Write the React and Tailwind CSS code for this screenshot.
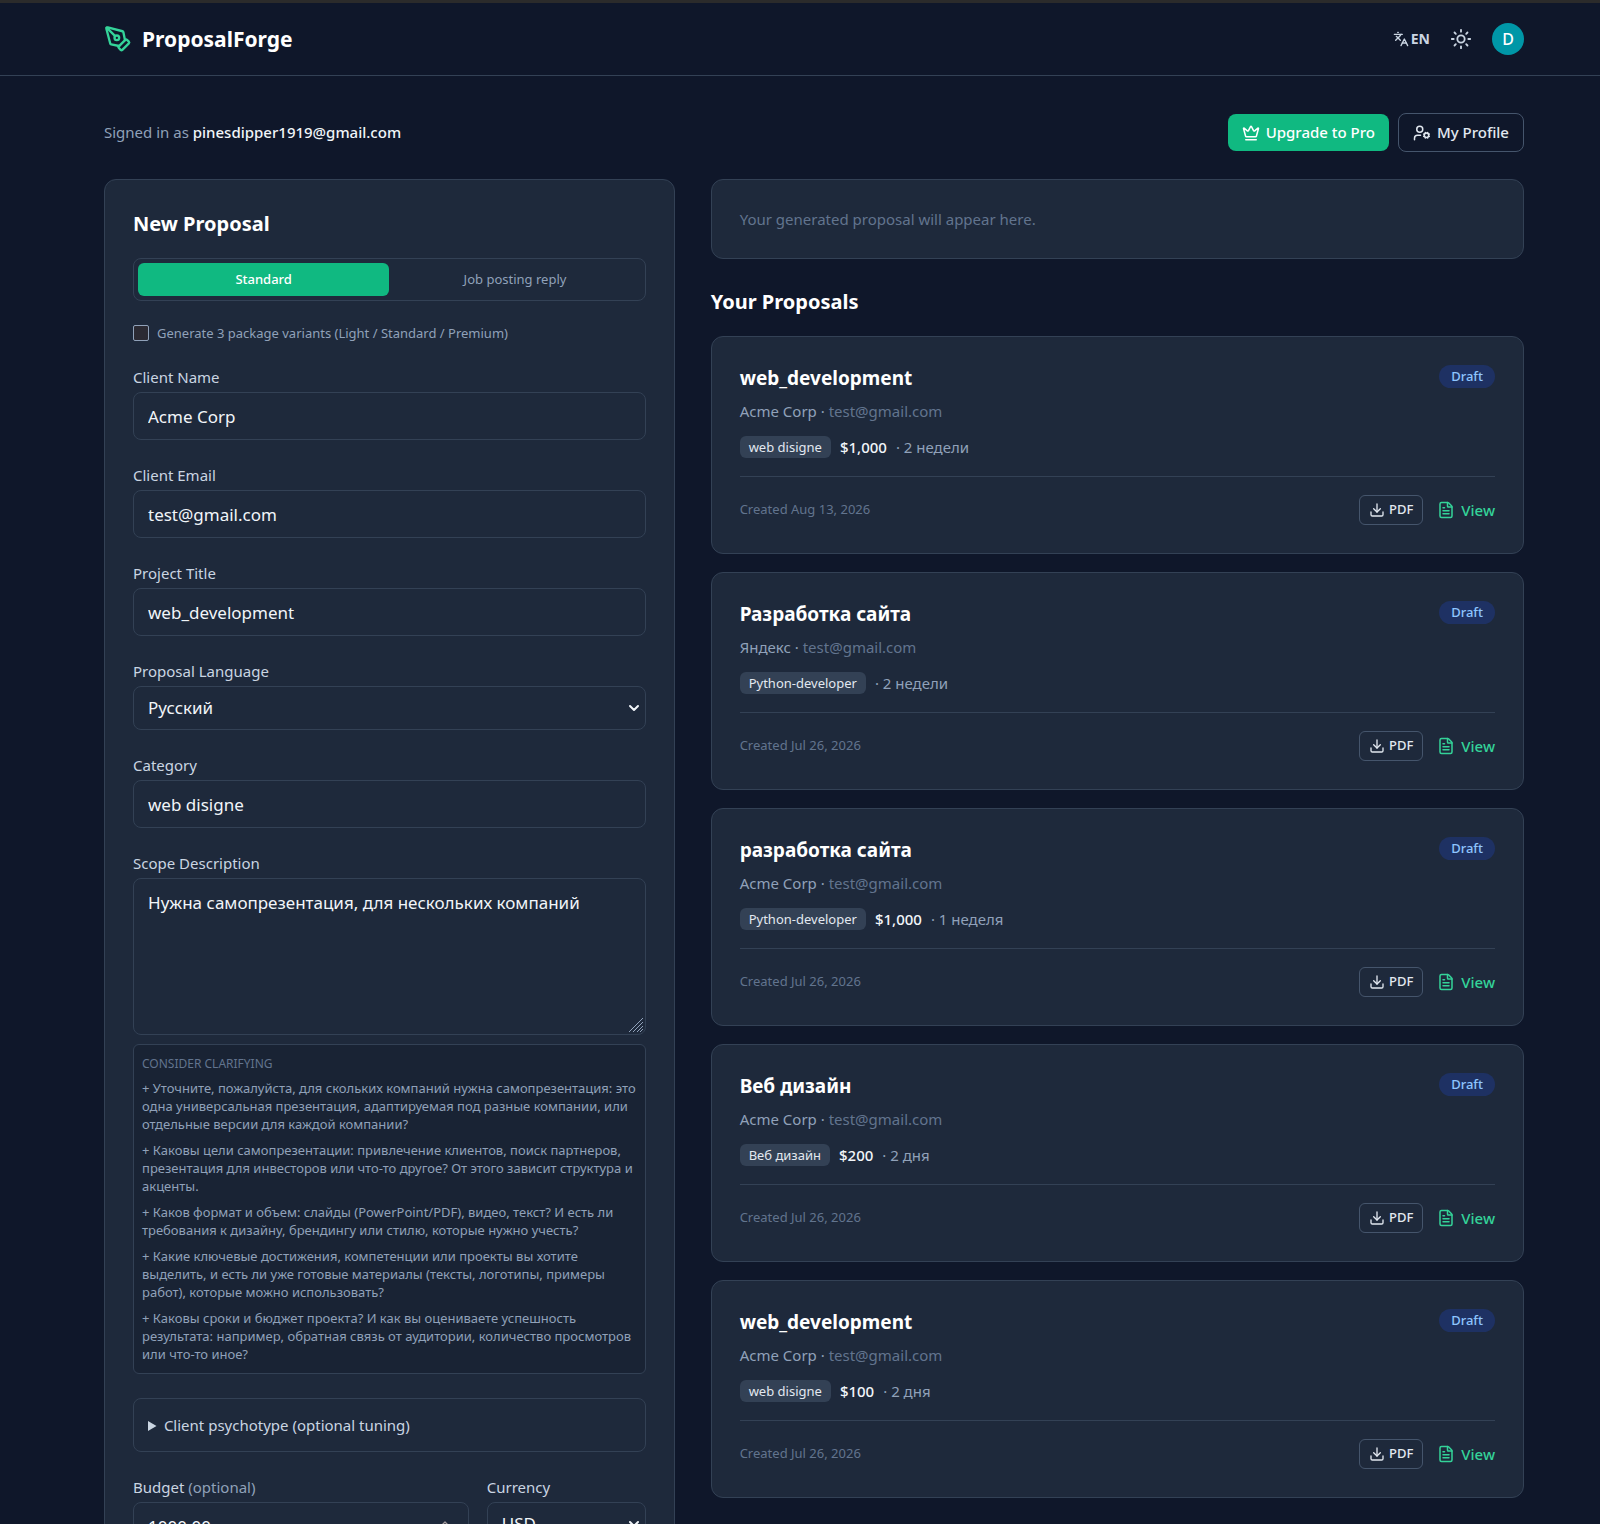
import { useState } from 'react'
import { ChevronDown, ChevronUp, Crown, Download, FileText, Languages, PenTool, Sun, UserCog } from 'lucide-react'

const PROPOSALS = [
  { id: 1, title: 'web_development', client: 'Acme Corp', category: 'web disigne', budget: '$1,000', term: '2 недели', created: 'Aug 13, 2026' },
  { id: 2, title: 'Разработка сайта', client: 'Яндекс', category: 'Python-developer', budget: '', term: '2 недели', created: 'Jul 26, 2026' },
  { id: 3, title: 'разработка сайта', client: 'Acme Corp', category: 'Python-developer', budget: '$1,000', term: '1 неделя', created: 'Jul 26, 2026' },
  { id: 4, title: 'Веб дизайн', client: 'Acme Corp', category: 'Веб дизайн', budget: '$200', term: '2 дня', created: 'Jul 26, 2026' },
  { id: 5, title: 'web_development', client: 'Acme Corp', category: 'web disigne', budget: '$100', term: '2 дня', created: 'Jul 26, 2026' },
]

const CLARIFICATIONS = [
  'Уточните, пожалуйста, для скольких компаний нужна самопрезентация: это одна универсальная презентация, адаптируемая под разные компании, или отдельные версии для каждой компании?',
  'Каковы цели самопрезентации: привлечение клиентов, поиск партнеров, презентация для инвесторов или что-то другое? От этого зависит структура и акценты.',
  'Каков формат и объем: слайды (PowerPoint/PDF), видео, текст? И есть ли требования к дизайну, брендингу или стилю, которые нужно учесть?',
  'Какие ключевые достижения, компетенции или проекты вы хотите выделить, и есть ли уже готовые материалы (тексты, логотипы, примеры работ), которые можно использовать?',
  'Каковы сроки и бюджет проекта? И как вы оцениваете успешность результата: например, обратная связь от аудитории, количество просмотров или что-то иное?',
]

const fieldClass =
  'block w-full rounded-lg border border-[#334155] bg-[#1e293b] px-3.5 text-[17px] leading-6 text-slate-100 outline-none focus:border-[#10b981]'

function App() {
  return (
    <div className="h-screen overflow-hidden bg-[#0f172a] font-['Noto_Sans',sans-serif] text-slate-100 scheme-dark">
      <Header />
      <main className="pl-7">
        <div className="mx-auto max-w-[1484px] px-8 pt-[37px]">
          <div className="flex items-center justify-between">
            <p className="text-[15px] text-slate-400">
              Signed in as <span className="font-medium text-slate-100">pinesdipper1919@gmail.com</span>
            </p>
            <div className="flex items-center gap-[9px]">
              <button className="flex h-[37px] items-center gap-1.5 rounded-lg bg-[#10b981] px-3.5 text-[15px] font-medium text-white hover:bg-emerald-600">
                <Crown className="size-[18px]" />
                Upgrade to Pro
              </button>
              <button className="flex h-[39px] items-center gap-1.5 rounded-lg border border-slate-600 px-3.5 text-[15px] font-medium text-slate-200 hover:bg-[#1e293b]">
                <UserCog className="size-[18px]" />
                My Profile
              </button>
            </div>
          </div>

          <div className="mt-[27px] grid grid-cols-12 items-start gap-9">
            <ProposalForm />
            <section className="col-span-7">
              <div className="rounded-xl border border-[#334155] bg-[#1e293b] px-7 py-7">
                <p className="text-[15px] leading-[22px] text-slate-500">Your generated proposal will appear here.</p>
              </div>
              <h2 className="mt-[27px] text-xl leading-8 font-bold text-white">Your Proposals</h2>
              <ul className="mt-[18px] space-y-[18px]">
                {PROPOSALS.map((proposal) => (
                  <ProposalCard key={proposal.id} proposal={proposal} />
                ))}
              </ul>
            </section>
          </div>
        </div>
      </main>
    </div>
  )
}

function Header() {
  return (
    <header className="border-t-3 border-b border-t-[#2b2b2b] border-b-[#334155] pl-7">
      <div className="mx-auto flex h-[72px] max-w-[1484px] items-center justify-between px-8">
        <a href="#" className="flex items-center gap-2.5">
          <PenTool className="size-7 text-[#34d399]" />
          <span className="pt-0.5 text-[21px] font-bold text-white">ProposalForge</span>
        </a>
        <div className="flex items-center gap-5">
          <button className="flex items-center gap-0.5 text-sm font-bold text-slate-300">
            <Languages className="size-4" />
            EN
          </button>
          <button aria-label="Toggle theme" className="text-slate-300">
            <Sun className="size-[22px]" />
          </button>
          <button className="size-8 rounded-full bg-[#0097a7] text-base font-medium text-white">D</button>
        </div>
      </div>
    </header>
  )
}

function ProposalForm() {
  const [mode, setMode] = useState('standard')

  return (
    <form className="col-span-5 rounded-xl border border-[#334155] bg-[#1e293b] px-7 py-7">
      <h2 className="text-xl leading-8 font-bold text-white">New Proposal</h2>

      <div className="mt-[18px] flex h-[43px] rounded-lg border border-[#334155] p-1">
        <ModeButton active={mode === 'standard'} onClick={() => setMode('standard')}>
          Standard
        </ModeButton>
        <ModeButton active={mode === 'reply'} onClick={() => setMode('reply')}>
          Job posting reply
        </ModeButton>
      </div>

      <label className="mt-[23px] flex items-center gap-2 text-[13px] leading-[18px] text-slate-400">
        <input
          type="checkbox"
          className="size-4 appearance-none rounded-xs border border-slate-400 bg-[#2b2a33] checked:bg-[#10b981]"
        />
        Generate 3 package variants (Light / Standard / Premium)
      </label>

      <div className="mt-6 space-y-6">
        <Field id="client-name" label="Client Name">
          <input id="client-name" defaultValue="Acme Corp" className={`${fieldClass} h-12`} />
        </Field>
        <Field id="client-email" label="Client Email">
          <input id="client-email" type="email" defaultValue="test@gmail.com" className={`${fieldClass} h-12`} />
        </Field>
        <Field id="project-title" label="Project Title">
          <input id="project-title" defaultValue="web_development" className={`${fieldClass} h-12`} />
        </Field>
        <Field id="language" label="Proposal Language">
          <Select id="language" options={['Русский', 'English']} />
        </Field>
        <Field id="category" label="Category">
          <input id="category" defaultValue="web disigne" className={`${fieldClass} h-12`} />
        </Field>
        <div>
          <Field id="scope" label="Scope Description">
            <div className="relative">
              <textarea
                id="scope"
                defaultValue="Нужна самопрезентация, для нескольких компаний"
                className={`${fieldClass} h-[157px] resize-y py-3 [&::-webkit-resizer]:bg-transparent`}
              />
              <svg
                viewBox="0 0 16 16"
                className="pointer-events-none absolute right-0.5 bottom-0.5 size-4 stroke-slate-400"
                fill="none"
              >
                <path d="M1 15 15 1M5 15 15 5M9 15l6-6M12 15l3-3" />
              </svg>
            </div>
          </Field>
          <div className="mt-[9px] rounded-md border border-[#334155] bg-[#192334] px-2 py-2.5 text-[13px] leading-[18px] text-slate-400">
            <p className="mb-1.5 text-xs leading-[18px] text-slate-500 uppercase">Consider clarifying</p>
            <ul className="space-y-2">
              {CLARIFICATIONS.map((text) => (
                <li key={text}>
                  <button type="button" className="block text-left hover:text-[#34d399]">
                    {`+ ${text}`}
                  </button>
                </li>
              ))}
            </ul>
          </div>
        </div>

        <details className="rounded-lg border border-[#334155] px-3.5 py-3.5 text-[15px] leading-6 text-slate-300">
          <summary className="cursor-pointer">Client psychotype (optional tuning)</summary>
        </details>

        <div className="grid grid-cols-3 gap-[18px]">
          <div className="col-span-2">
            <Field
              id="budget"
              label={
                <>
                  Budget <span className="text-slate-400">(optional)</span>
                </>
              }
            >
              <div className="relative">
                <input
                  id="budget"
                  type="number"
                  step="0.01"
                  defaultValue="1000.00"
                  className={`${fieldClass} h-12 [appearance:textfield] [&::-webkit-inner-spin-button]:appearance-none`}
                />
                <ChevronUp className="pointer-events-none absolute top-3.5 right-4 size-4 text-[#a39a9c]" />
              </div>
            </Field>
          </div>
          <Field id="currency" label="Currency">
            <Select id="currency" options={['USD', 'EUR']} />
          </Field>
        </div>
      </div>
    </form>
  )
}

function ModeButton({ active, onClick, children }) {
  return (
    <button
      type="button"
      onClick={onClick}
      className={`flex-1 rounded-md text-[13px] ${active ? 'bg-[#10b981] font-medium text-white' : 'text-slate-400'}`}
    >
      {children}
    </button>
  )
}

function Field({ id, label, children }) {
  return (
    <div>
      <label htmlFor={id} className="mb-1 block text-[15px] leading-[22px] text-slate-300">
        {label}
      </label>
      {children}
    </div>
  )
}

function Select({ id, options }) {
  return (
    <div className="relative">
      <select id={id} className={`${fieldClass} h-11 appearance-none`}>
        {options.map((option) => (
          <option key={option}>{option}</option>
        ))}
      </select>
      <ChevronDown strokeWidth={3} className="pointer-events-none absolute top-3.5 right-1 size-4 text-slate-100" />
    </div>
  )
}

function ProposalCard({ proposal }) {
  const { title, client, category, budget, term, created } = proposal
  return (
    <li className="rounded-xl border border-[#334155] bg-[#1e293b] px-7 py-7">
      <div className="flex items-start justify-between">
        <h3 className="text-[19px] leading-[27px] font-bold text-white">{title}</h3>
        <span className="rounded-full bg-[#1e3163] px-3 text-[13px] leading-[23px] font-medium text-blue-300">Draft</span>
      </div>
      <p className="mt-2 text-[15px] leading-[22px] text-slate-400">
        {client} · <span className="text-slate-500">test@gmail.com</span>
      </p>
      <div className="mt-3.5 flex items-center gap-[9px] text-[15px] leading-[22px] text-slate-400">
        <span className="rounded-md bg-[#334155] px-[9px] text-[13px] text-slate-200">{category}</span>
        {budget && <span className="font-medium text-slate-100">{budget}</span>}
        <span>· {term}</span>
      </div>
      <div className="mt-[18px] flex items-center justify-between border-t border-[#334155] pt-[18px]">
        <p className="text-[13px] text-slate-500">Created {created}</p>
        <div className="flex items-center gap-3.5">
          <button className="flex h-[30px] items-center gap-1 rounded-md border border-slate-600 px-[9px] text-[13px] font-medium text-slate-200 hover:bg-[#334155]">
            <Download className="size-4" />
            PDF
          </button>
          <a href="#" className="flex items-center gap-1.5 text-[15px] font-medium text-[#34d399] hover:underline">
            <FileText className="size-[18px]" />
            View
          </a>
        </div>
      </div>
    </li>
  )
}

export default App
